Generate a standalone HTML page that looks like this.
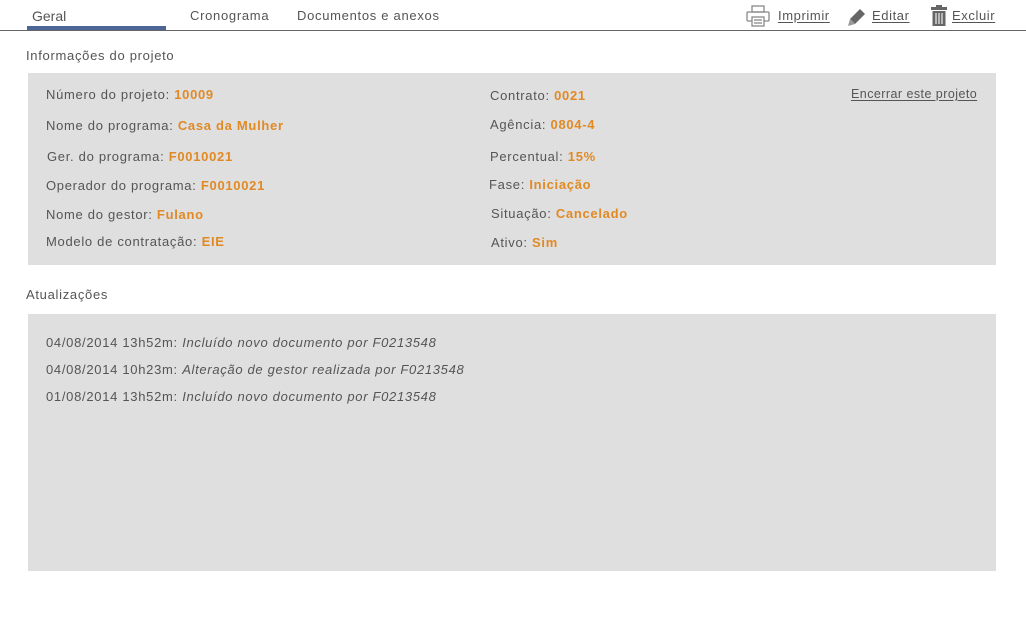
<!DOCTYPE html>
<html><head><meta charset="utf-8"><style>
body{margin:0;width:1026px;height:617px;background:#fff;font-family:"Liberation Sans",sans-serif;font-size:13px;color:#555;position:relative;overflow:hidden;letter-spacing:0.7px}
.a{position:absolute;white-space:nowrap;line-height:16px}
.o{color:#e08a24;font-weight:bold}
.box{position:absolute;background:#e0dfe0}
u{text-decoration:underline;text-underline-offset:2px}
i{font-style:italic;letter-spacing:0.68px}
</style></head><body>
<div class="a" style="left:32px;top:8px;font-size:14px;color:#555;letter-spacing:0">Geral</div>
<div style="position:absolute;left:27px;top:26px;width:139px;height:4px;background:#4e6598"></div>
<div class="a" style="left:190px;top:8px">Cronograma</div>
<div class="a" style="left:297px;top:8px">Documentos e anexos</div>
<div style="position:absolute;left:0;top:30px;width:1026px;height:1px;background:#666"></div>

<svg style="position:absolute;left:746px;top:5px" width="24" height="22" viewBox="0 0 24 22" fill="none" stroke="#888" stroke-width="1.3"><rect x="6" y="1" width="12" height="6"/><rect x="1" y="7" width="22" height="9" rx="1"/><rect x="6" y="12" width="12" height="9" fill="#fff"/><line x1="8" y1="15" x2="16" y2="15"/><line x1="8" y1="18" x2="16" y2="18"/></svg>
<div class="a" style="left:778px;top:8px;letter-spacing:0.6px"><u>Imprimir</u></div>
<svg style="position:absolute;left:846px;top:6px" width="22" height="20" viewBox="0 0 22 20"><path d="M4 13 L14 3 L19 8 L9 18 Z" fill="#666"/><path d="M4 13 L9 18 L2 20 Z" fill="#999"/></svg>
<div class="a" style="left:872px;top:8px;letter-spacing:0.6px"><u>Editar</u></div>
<svg style="position:absolute;left:931px;top:5px" width="16" height="22" viewBox="0 0 16 22" fill="#666"><rect x="0" y="2" width="16" height="3"/><rect x="5" y="0" width="6" height="3"/><path d="M1.5 6 H14.5 V21 H1.5 Z"/><g stroke="#eee" stroke-width="1.2"><line x1="5" y1="8" x2="5" y2="19"/><line x1="8" y1="8" x2="8" y2="19"/><line x1="11" y1="8" x2="11" y2="19"/></g></svg>
<div class="a" style="left:952px;top:8px;letter-spacing:0.6px"><u>Excluir</u></div>

<div class="a" style="left:26px;top:48px">Informações do projeto</div>
<div class="box" style="left:28px;top:73px;width:968px;height:192px"></div>
<div class="a" style="left:46px;top:87px">Número do projeto: <span class="o">10009</span></div>
<div class="a" style="left:46px;top:118px">Nome do programa: <span class="o">Casa da Mulher</span></div>
<div class="a" style="left:47px;top:149px">Ger. do programa: <span class="o">F0010021</span></div>
<div class="a" style="left:46px;top:178px">Operador do programa: <span class="o">F0010021</span></div>
<div class="a" style="left:46px;top:207px">Nome do gestor: <span class="o">Fulano</span></div>
<div class="a" style="left:46px;top:234px">Modelo de contratação: <span class="o">EIE</span></div>
<div class="a" style="left:490px;top:88px">Contrato: <span class="o">0021</span></div>
<div class="a" style="left:490px;top:117px">Agência: <span class="o">0804-4</span></div>
<div class="a" style="left:490px;top:149px">Percentual: <span class="o">15%</span></div>
<div class="a" style="left:489px;top:177px">Fase: <span class="o">Iniciação</span></div>
<div class="a" style="left:491px;top:206px">Situação: <span class="o">Cancelado</span></div>
<div class="a" style="left:491px;top:235px">Ativo: <span class="o">Sim</span></div>
<div class="a" style="left:851px;top:86px;font-size:12.5px;letter-spacing:0.45px"><u>Encerrar este projeto</u></div>

<div class="a" style="left:26px;top:287px">Atualizações</div>
<div class="box" style="left:28px;top:314px;width:968px;height:257px"></div>
<div class="a" style="left:46px;top:335px">04/08/2014 13h52m: <i>Incluído novo documento por F0213548</i></div>
<div class="a" style="left:46px;top:362px">04/08/2014 10h23m: <i>Alteração de gestor realizada por F0213548</i></div>
<div class="a" style="left:46px;top:389px">01/08/2014 13h52m: <i>Incluído novo documento por F0213548</i></div>
</body></html>
